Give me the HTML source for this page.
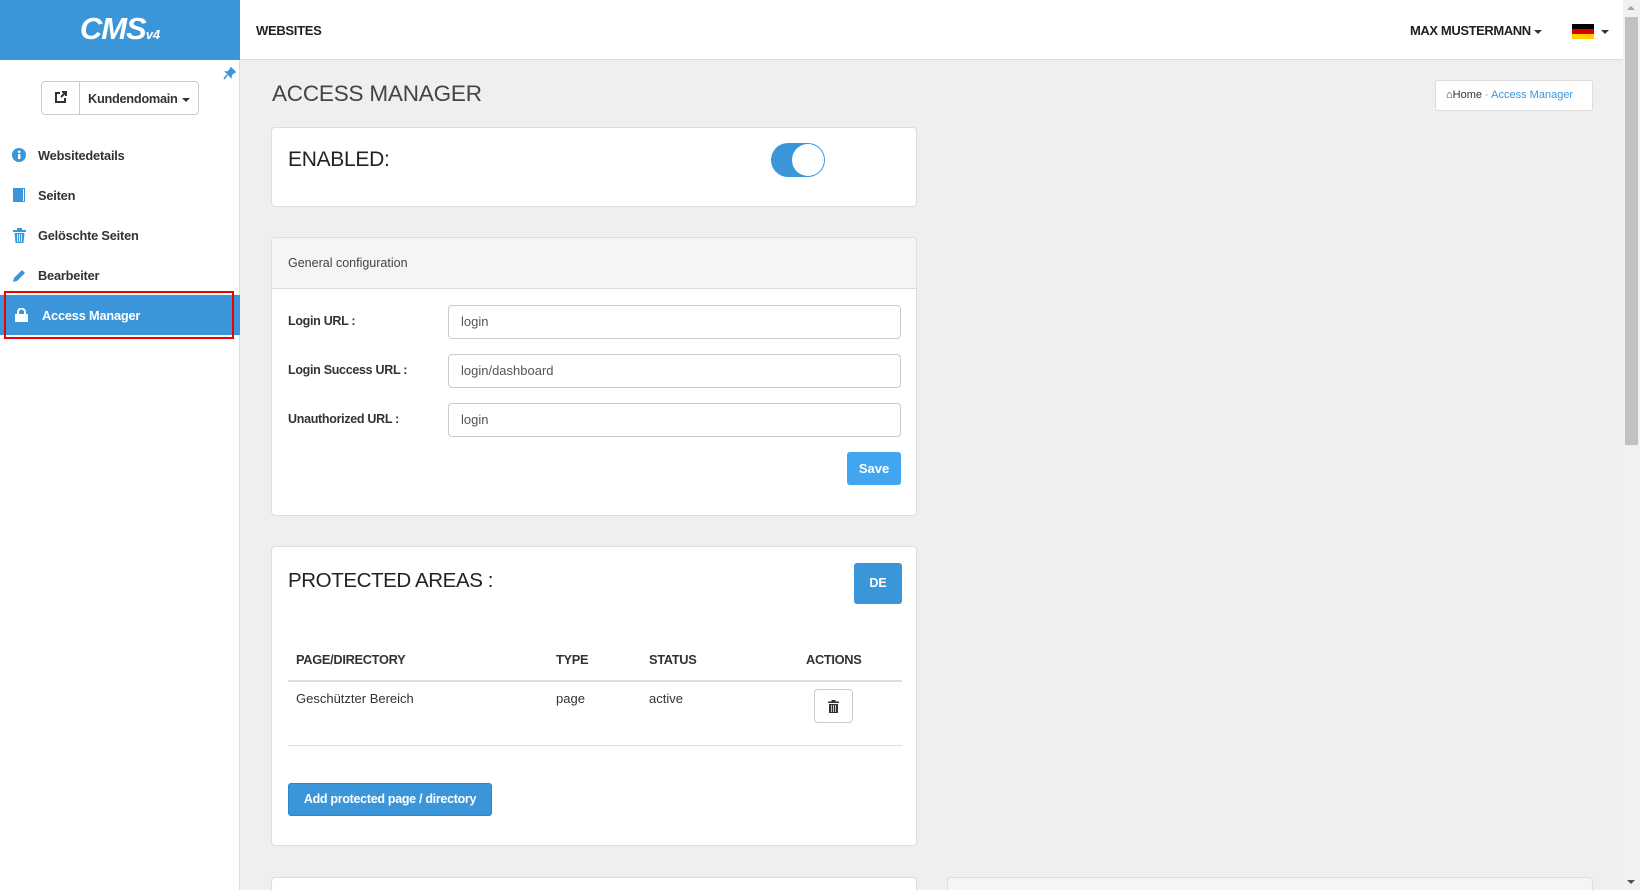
<!DOCTYPE html>
<html style="width:1640px;height:890px;overflow:hidden"><head><meta charset="utf-8"><style>
*{box-sizing:border-box;margin:0;padding:0}
body{width:1640px;height:890px;overflow:hidden;background:#efefef;font-family:"Liberation Sans",Arial,sans-serif;color:#333;position:relative;font-size:14px}
.abs{position:absolute}
.card{position:absolute;background:#fff;border:1px solid #ddd;border-radius:4px}
.nav{position:absolute;left:0;width:240px;height:40px;display:flex;align-items:center;font-weight:bold;font-size:12.8px;color:#333;letter-spacing:-0.2px}
.nav .ic{width:38px;display:flex;justify-content:center;padding-left:0}
.lbl{position:absolute;left:16px;font-weight:bold;font-size:12.5px;color:#333;letter-spacing:-0.3px}
.inp{position:absolute;left:176px;width:453px;height:34px;border:1px solid #ccc;border-radius:4px;padding:0 12px;line-height:32px;font-size:13px;color:#555}
.th{position:absolute;top:105px;font-weight:bold;font-size:12.8px;color:#333;letter-spacing:-0.3px}
.td{position:absolute;top:144px;font-size:13px;color:#333}
</style></head><body>
<div class="abs" style="left:0;top:0;width:240px;height:60px;background:#3a96d9;color:#fff;text-align:center;line-height:58px;font-size:31px;font-weight:bold;font-style:italic;letter-spacing:-1px">CMS<span style="font-size:13px;letter-spacing:0">v4</span></div>
<div class="abs" style="left:240px;top:0;width:1383px;height:60px;background:#fff;border-bottom:1px solid #ddd"></div>
<div class="abs" style="left:256px;top:23px;font-size:13px;font-weight:bold;color:#222;letter-spacing:-0.3px">WEBSITES</div>
<div class="abs" style="left:1410px;top:23px;font-size:13px;font-weight:bold;color:#222;letter-spacing:-0.4px">MAX MUSTERMANN<span style="display:inline-block;border-left:4px solid transparent;border-right:4px solid transparent;border-top:4px solid #333;margin-left:3px;vertical-align:middle"></span></div>
<div class="abs" style="left:1572px;top:24px;width:22px;height:15px;background:linear-gradient(#000 0 33%,#dd0000 33% 66%,#ffce00 66%)"></div>
<div class="abs" style="left:1601px;top:30px;border-left:4px solid transparent;border-right:4px solid transparent;border-top:4px solid #333"></div>
<div class="abs" style="left:0;top:60px;width:240px;height:830px;background:#fff;border-right:1px solid #ddd"></div>
<svg class="abs" style="left:223px;top:67px" width="13" height="13" viewBox="0 0 13 13"><path d="M8 1l4 4-2 1-2 2 0 2-5-5 2 0 2-2zM4 8l-3 4" stroke="#3a96d9" stroke-width="1.6" fill="#3a96d9"/></svg>
<div class="abs" style="left:41px;top:81px;width:158px;height:34px;border:1px solid #ccc;border-radius:4px;background:#fff"></div>
<div class="abs" style="left:79px;top:81px;width:1px;height:34px;background:#ccc"></div>
<svg class="abs" style="left:54px;top:90px" width="14" height="14" viewBox="0 0 14 14"><path d="M6 3H2v9h9V8" stroke="#333" stroke-width="2" fill="none"/><path d="M7 7l5-5M8 2h4v4" stroke="#333" stroke-width="2" fill="none"/></svg>
<div class="abs" style="left:88px;top:91px;font-size:12.8px;font-weight:bold;color:#333;letter-spacing:-0.3px">Kundendomain</div>
<div class="abs" style="left:182px;top:98px;border-left:4px solid transparent;border-right:4px solid transparent;border-top:4px solid #333"></div>

<div class="nav" style="top:135px"><div class="ic"><svg width="14" height="14"><circle cx="7" cy="7" r="7" fill="#3a96d9"/><rect x="6" y="6" width="2.4" height="5" fill="#fff"/><circle cx="7.2" cy="3.8" r="1.3" fill="#fff"/></svg></div>Websitedetails</div>
<div class="nav" style="top:175px"><div class="ic"><svg width="13" height="14"><rect x="0" y="0" width="12" height="14" fill="#3a96d9"/><rect x="10" y="1" width="1" height="12" fill="#fff"/></svg></div>Seiten</div>
<div class="nav" style="top:215px"><div class="ic"><svg width="13" height="15"><rect x="0" y="2" width="13" height="2" fill="#3a96d9"/><rect x="4" y="0" width="5" height="2" fill="#3a96d9"/><path d="M1.5 5h10l-1 10h-8z" fill="#3a96d9"/><path d="M4.5 6v8M6.5 6v8M8.5 6v8" stroke="#fff" stroke-width=".8"/></svg></div>Gelöschte Seiten</div>
<div class="nav" style="top:255px"><div class="ic"><svg width="15" height="15"><path d="M1 14l1-4 8-8 3 3-8 8z" fill="#3a96d9"/></svg></div>Bearbeiter</div>
<div class="nav" style="top:295px;background:#3a96d9;color:#fff"><div class="ic" style="width:42px"><svg width="13" height="14"><path d="M3 6V4a3.5 3.5 0 0 1 7 0v2" stroke="#fff" stroke-width="2" fill="none"/><rect x="0" y="6" width="13" height="8" fill="#fff"/></svg></div>Access Manager</div>
<div class="abs" style="left:4px;top:291px;width:230px;height:48px;border:2px solid #e00"></div>

<div class="abs" style="left:272px;top:81px;font-size:22.5px;color:#444;letter-spacing:-0.2px">ACCESS MANAGER</div>
<div class="abs" style="left:1435px;top:80px;width:158px;height:31px;background:#fff;border:1px solid #ddd;border-radius:3px;font-size:11px;line-height:29px;padding-left:10px;color:#333">&#8962;Home <span style="color:#bbb">-</span> <span style="color:#3a96d9">Access Manager</span></div>

<div class="card" style="left:271px;top:127px;width:646px;height:80px">
<div class="abs" style="left:16px;top:20px;font-size:21px;color:#222;letter-spacing:-0.3px">ENABLED:</div>
<div class="abs" style="left:499px;top:15px;width:54px;height:34px;border-radius:17px;background:#3a96d9"></div>
<div class="abs" style="left:520px;top:16px;width:32px;height:32px;border-radius:16px;background:#fff"></div>
</div>
<div class="card" style="left:271px;top:237px;width:646px;height:279px;overflow:hidden">
<div class="abs" style="left:0;top:0;width:100%;height:51px;background:#f5f5f5;border-bottom:1px solid #ddd"></div>
<div class="abs" style="left:16px;top:18px;font-size:12.5px;color:#444">General configuration</div>
<div class="lbl" style="top:76px">Login URL :</div><div class="inp" style="top:67px">login</div>
<div class="lbl" style="top:125px">Login Success URL :</div><div class="inp" style="top:116px">login/dashboard</div>
<div class="lbl" style="top:174px">Unauthorized URL :</div><div class="inp" style="top:165px">login</div>
<div class="abs" style="left:575px;top:214px;width:54px;height:33px;background:#42a5f0;border-radius:3px;color:#fff;font-weight:bold;font-size:13px;text-align:center;line-height:33px">Save</div>
</div>
<div class="card" style="left:271px;top:546px;width:646px;height:300px">
<div class="abs" style="left:16px;top:22px;font-size:20.5px;color:#222;letter-spacing:-0.4px">PROTECTED AREAS :</div>
<div class="abs" style="left:582px;top:16px;width:48px;height:41px;background:#3a96d9;border-radius:3px;color:#fff;font-weight:bold;font-size:12.5px;text-align:center;line-height:41px">DE</div>
<div class="th" style="left:24px">PAGE/DIRECTORY</div><div class="th" style="left:284px">TYPE</div><div class="th" style="left:377px">STATUS</div><div class="th" style="left:534px">ACTIONS</div>
<div class="abs" style="left:16px;top:133px;width:614px;height:2px;background:#ddd"></div>
<div class="td" style="left:24px">Geschützter Bereich</div><div class="td" style="left:284px">page</div><div class="td" style="left:377px">active</div>
<div class="abs" style="left:542px;top:142px;width:39px;height:34px;border:1px solid #ccc;border-radius:4px"></div>
<svg class="abs" style="left:556px;top:153px" width="11" height="13"><rect x="0" y="1.5" width="11" height="1.5" fill="#333"/><rect x="3.5" y="0" width="4" height="1.5" fill="#333"/><path d="M1 4h9v9H1z" fill="#333"/><path d="M3.5 5v7M5.5 5v7M7.5 5v7" stroke="#fff" stroke-width=".7"/></svg>
<div class="abs" style="left:16px;top:198px;width:614px;height:1px;background:#ddd"></div>
<div class="abs" style="left:16px;top:236px;width:204px;height:33px;background:#3a96d9;border:1px solid #2e86c6;border-radius:3px;color:#fff;font-weight:bold;font-size:12.5px;letter-spacing:-0.3px;text-align:center;line-height:31px">Add protected page / directory</div>
</div>
<div class="card" style="left:271px;top:877px;width:646px;height:13px;border-bottom:none;border-radius:4px 4px 0 0"></div>
<div class="card" style="left:947px;top:877px;width:646px;height:13px;background:#f5f5f5;border-bottom:none;border-radius:4px 4px 0 0"></div>
<div class="abs" style="left:1623px;top:0;width:17px;height:890px;background:#f1f1f1"></div>
<div class="abs" style="left:1625px;top:17px;width:13px;height:428px;background:#c1c1c1"></div>
<div class="abs" style="left:1627px;top:6px;border-left:4px solid transparent;border-right:4px solid transparent;border-bottom:4px solid #a3a3a3"></div>
<div class="abs" style="left:1627px;top:880px;border-left:4px solid transparent;border-right:4px solid transparent;border-top:4px solid #505050"></div>
</body></html>
